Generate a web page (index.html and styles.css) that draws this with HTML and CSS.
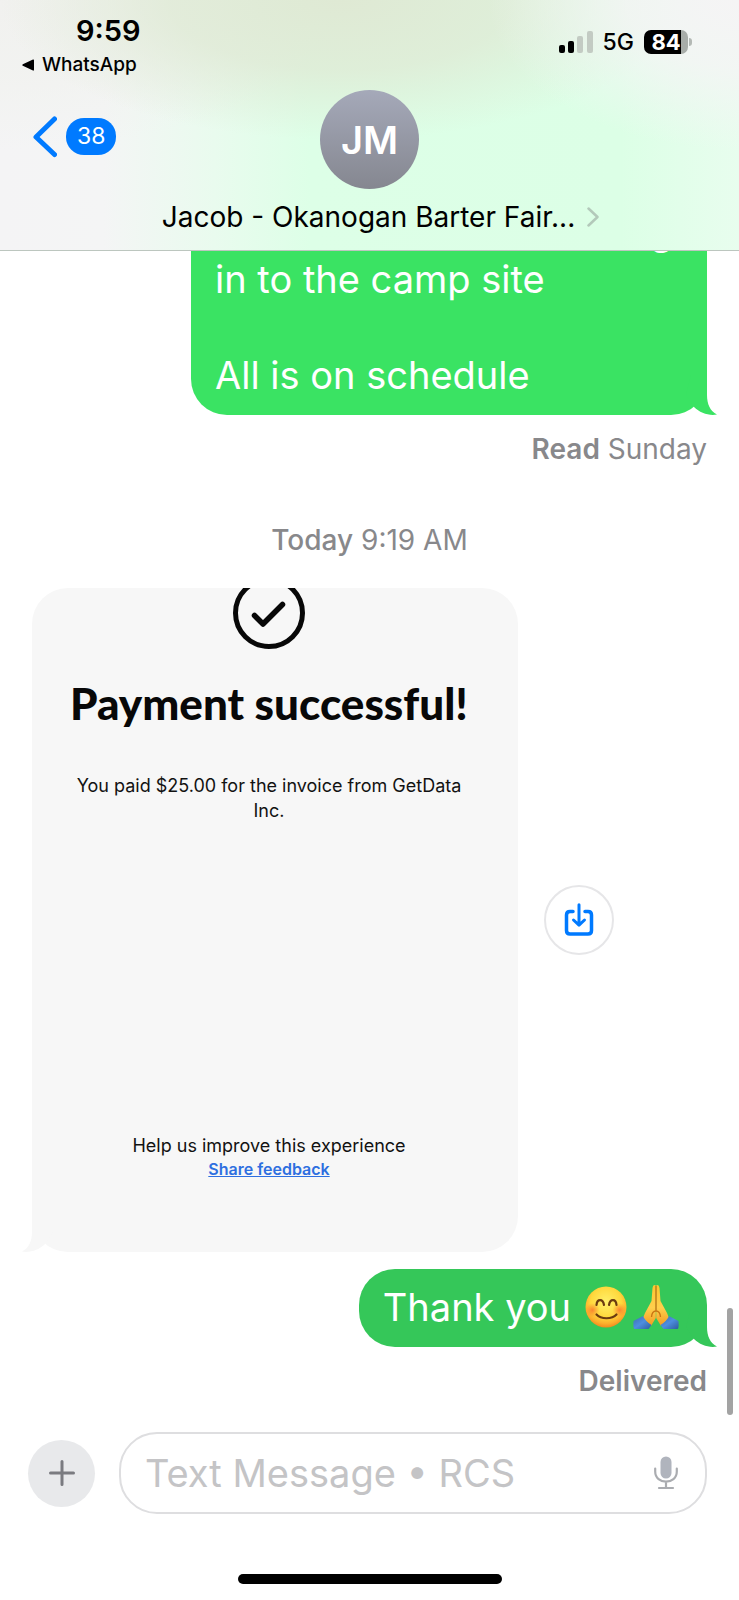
FILE: index.html
```html
<!DOCTYPE html>
<html lang="en">
<head>
<meta charset="utf-8">
<meta name="viewport" content="width=device-width, initial-scale=1">
<title>Messages</title>
<link rel="stylesheet" href="styles.css">
</head>
<body>
<header class="header">
  <div class="status">
    <div class="status-left">
      <time class="clock">9:59</time>
      <a class="return" href="#">
        <svg width="12" height="12" viewBox="0 0 12 12" aria-hidden="true"><path d="M11 0.5Q12 0 12 1.5V10.500Q12 12 11 11.500L0.800 6.800Q-0.200 6 0.800 5.200Z"/></svg>
        <span>WhatsApp</span>
      </a>
    </div>
    <div class="status-right">
      <svg width="34" height="22" viewBox="0 0 34 22" aria-hidden="true">
        <rect x="0" y="14" width="6" height="8" rx="2"/>
        <rect x="9" y="10" width="6" height="12" rx="2"/>
        <rect x="18" y="5" width="6" height="17" rx="2" fill="#c3cbc3"/>
        <rect x="28" y="0" width="6" height="22" rx="2" fill="#c3cbc3"/>
      </svg>
      <span class="network">5G</span>
      <span class="battery">84</span>
    </div>
  </div>
  <nav class="nav">
    <a class="back" href="#" aria-label="Back, 38 unread">
      <svg width="24" height="42" viewBox="0 0 24 42" aria-hidden="true"><path d="M21.500 3L3 21L21.500 38.500" fill="none" stroke="#007aff" stroke-width="5" stroke-linecap="round" stroke-linejoin="round"/></svg>
      <span class="unread">38</span>
    </a>
    <span class="avatar">JM</span>
  </nav>
  <button class="contact" type="button">
    <span>Jacob - Okanogan Barter Fair...</span>
    <svg width="12" height="20" viewBox="0 0 12 20" aria-hidden="true"><path d="M1.500 1.500L10.500 10L1.500 18.500" fill="none" stroke="#b3c9ba" stroke-width="2.500" stroke-linecap="round" stroke-linejoin="round"/></svg>
  </button>
</header>

<main class="thread">
  <div class="bubble bubble-early">
    <span class="line-end">g</span>
    <p>in to the camp site</p>
    <p class="paragraph">All is on schedule</p>
    <svg class="tail" width="36" height="40" viewBox="0 0 36 40" aria-hidden="true"><path d="M10 0H26V20C26 29 29 36 36 39.500C28 41 19 38 13 32L5 20Z"/></svg>
  </div>
  <p class="receipt"><strong>Read</strong> Sunday</p>
  <p class="stamp"><b>Today</b> 9:19 AM</p>

  <div class="attachment">
    <article class="card">
      <div class="card-body">
        <svg class="tick" width="72" height="61" viewBox="0 0 72 61" fill="none" stroke="#080808" aria-hidden="true"><circle cx="36" cy="25" r="33.500" stroke-width="5"/><path d="M21.500 27.500L30 36L49.500 16.500" stroke-width="5.500" stroke-linecap="round" stroke-linejoin="round"/></svg>
        <h1 class="card-title">Payment successful!</h1>
        <p class="card-text">You paid $25.00 for the invoice from GetData Inc.</p>
        <footer class="card-footer">
          <p>Help us improve this experience</p>
          <a href="#">Share feedback</a>
        </footer>
      </div>
      <svg class="tail-left" width="36" height="40" viewBox="0 0 36 40" aria-hidden="true"><path d="M26 0H10V20C10 29 7 36 0 39.500C8 41 17 38 23 32L31 20Z"/></svg>
    </article>
    <button class="save" type="button" aria-label="Save image">
      <svg width="30" height="34" viewBox="0 0 30 34" fill="none" stroke="#007aff" stroke-width="3.500" stroke-linecap="round" stroke-linejoin="round" aria-hidden="true"><path d="M9 8.500H6Q2.500 8.500 2.500 12V27.500Q2.500 31 6 31H24Q27.500 31 27.500 27.500V12Q27.500 8.500 24 8.500H21"/><path d="M15 1.800V21.500M9.500 17L15 22.200L20.500 17" stroke-width="3"/></svg>
    </button>
  </div>

  <div class="bubble bubble-thanks">
    <span>Thank you</span>
    <svg width="42" height="42" viewBox="0 0 42 42" role="img" aria-label="Smiling face">
      <defs>
        <radialGradient id="face" cx="50%" cy="38%" r="62%"><stop offset="0" stop-color="#fff06a"/><stop offset=".6" stop-color="#ffd83c"/><stop offset=".85" stop-color="#fcae2c"/><stop offset="1" stop-color="#f28a1e"/></radialGradient>
        <radialGradient id="blush"><stop offset="0" stop-color="#f9622b" stop-opacity=".7"/><stop offset="1" stop-color="#f9722b" stop-opacity="0"/></radialGradient>
      </defs>
      <circle cx="21" cy="21" r="20.500" fill="url(#face)"/>
      <circle cx="7.500" cy="24" r="7" fill="url(#blush)"/><circle cx="34.500" cy="24" r="7" fill="url(#blush)"/>
      <g fill="none" stroke="#6b3b10" stroke-width="2.200" stroke-linecap="round"><path d="M11.500 19C12 12.500 18 12.500 19 19"/><path d="M24 19C25 12.500 31 12.500 31.500 19"/><path d="M11.500 28.500C16 33.500 27 33.500 31.500 28.500"/></g>
    </svg>
    <svg width="46" height="46" viewBox="0 0 46 46" role="img" aria-label="Folded hands">
      <defs>
        <linearGradient id="skin" x1="0" y1="0" x2="0" y2="1"><stop offset="0" stop-color="#ffc530"/><stop offset=".55" stop-color="#ffcf4c"/><stop offset="1" stop-color="#f39b22"/></linearGradient>
        <linearGradient id="sleeve" x1="0" y1="0" x2="1" y2="1"><stop offset="0" stop-color="#3d6cae"/><stop offset=".5" stop-color="#4d8ee0"/><stop offset="1" stop-color="#2f5d9e"/></linearGradient>
      </defs>
      <path d="M22.800 1.500Q20 0 19.500 4L18.500 17L12 29L10 34L18 42L22.800 34Z" fill="url(#skin)"/>
      <path d="M23.200 1.500Q26 0 26.500 4L27.500 17L34 29L36 34L28 42L23.200 34Z" fill="url(#skin)"/>
      <path d="M23 2V27M23 27Q19 27 18.500 33M23 27Q27 27 27.500 33" fill="none" stroke="#c87413" stroke-width="1.300"/>
      <path d="M0.500 37L10 32Q12 37 18.500 41L15.500 45H1.500Q0 45 0.500 37Z" fill="url(#sleeve)"/>
      <path d="M45.500 37L36 32Q34 37 27.500 41L30.500 45H44.500Q46 45 45.500 37Z" fill="url(#sleeve)"/>
    </svg>
    <svg class="tail" width="36" height="40" viewBox="0 0 36 40" aria-hidden="true"><path d="M10 0H26V20C26 29 29 36 36 39.500C28 41 19 38 13 32L5 20Z"/></svg>
  </div>
  <p class="receipt"><strong>Delivered</strong></p>
  <div class="scroll-thumb"></div>
</main>

<form class="composer">
  <button class="add" type="button" aria-label="Add attachment">
    <svg width="26" height="26" viewBox="0 0 26 26" aria-hidden="true"><path d="M13 1.500V24.500M1.500 13H24.500" stroke="#7a7b80" stroke-width="3" stroke-linecap="round"/></svg>
  </button>
  <div class="field">
    <input type="text" aria-label="Message" placeholder="Text Message • RCS">
    <button class="mic" type="button" aria-label="Dictate">
      <svg width="24" height="34" viewBox="0 0 24 34" aria-hidden="true"><rect x="6.500" y="0.500" width="11" height="22" rx="5.500" fill="#b0b4bd"/><path d="M1.200 12.500V15.500C1.200 29 22.800 29 22.800 15.500V12.500M12 25.500V32M5 32H19" fill="none" stroke="#aaacb0" stroke-width="2.200" stroke-linecap="round"/></svg>
    </button>
  </div>
</form>
<div class="home"></div>
</body>
</html>
```
FILE: styles.css
```css
* { box-sizing: border-box; margin: 0; }
html { height: 100%; }
body {
  display: flex;
  flex-direction: column;
  height: 100%;
  background: #fff;
  color: #000;
  font-family: Inter, "Liberation Sans", sans-serif;
}
svg { flex: none; display: block; }
button { padding: 0; border: 0; background: none; color: inherit; font: inherit; }
a { color: inherit; text-decoration: none; }

/* Header */
.header {
  flex: none;
  border-bottom: 1px solid #bcc6bf;
  background:
    radial-gradient(ellipse 34% 60% at 100% 0%, #f5f4f5 0%, #f5f4f5cc 45%, #f5f4f500 100%),
    radial-gradient(ellipse 46% 56% at 46% 0%, #dfe9d4 0%, #dfead5cc 50%, #dfead500 100%),
    radial-gradient(ellipse 46% 60% at 0% 0%, #f1f1ef 0%, #f1f2efcc 50%, #f1f2ef00 100%),
    linear-gradient(90deg, #f4f4f5 0%, #f4f5f5 14%, #e9fbee 29%, #ddffe7 42%, #dcffe6 84%, #e8fdee 100%);
}
.status { display: flex; justify-content: space-between; padding: 12px 51px 0 22px; height: 78px; }
.status-left { display: flex; flex-direction: column; gap: 4px; }
.clock { padding-left: 54px; font-size: 29px; line-height: 38px; font-weight: 600; }
.return { display: flex; align-items: center; gap: 8px; font-size: 19px; line-height: 22px; font-weight: 500; }
.status-right { display: flex; align-items: center; gap: 10px; height: 60px; }
.network { font-size: 23px; line-height: 28px; font-weight: 500; }
.battery {
  position: relative;
  width: 44px;
  border-radius: 7px;
  background: linear-gradient(90deg, #000 84%, #a8ada9 84%);
  color: #fff;
  font-size: 22px;
  line-height: 24px;
  font-weight: 700;
  text-align: center;
}
.battery::after {
  content: "";
  position: absolute;
  top: 8px;
  right: -4px;
  width: 3px;
  height: 8px;
  border-radius: 0 3px 3px 0;
  background: #b4b9b5;
}
.nav { display: grid; grid-template-columns: 1fr auto 1fr; align-items: center; padding: 12px 33px 9px; }
.back { display: flex; align-items: center; align-self: start; gap: 9px; height: 84px; padding-top: 9px; }
.unread {
  padding: 0 11px;
  border-radius: 18px;
  background: #007aff;
  color: #fff;
  font-size: 23px;
  line-height: 37px;
}
.avatar {
  display: grid;
  place-items: center;
  width: 99px;
  height: 99px;
  border-radius: 50%;
  background: linear-gradient(#a5a9b9, #858790);
  color: #fff;
  font-size: 38px;
  font-weight: 600;
}
.contact {
  display: flex;
  align-items: center;
  gap: 12px;
  margin: 0 auto;
  padding: 0 0 14px 22px;
  font-size: 28px;
  line-height: 38px;
}

/* Conversation */
.thread {
  position: relative;
  flex: 1;
  min-height: 0;
  display: flex;
  flex-direction: column;
  justify-content: flex-end;
  padding: 0 32px 17px;
  overflow: hidden;
}
.bubble {
  position: relative;
  flex: none;
  align-self: flex-end;
  padding: 14px 24px 16px;
  border-radius: 36px;
  background: var(--bubble);
  color: #fff;
  font-size: 38px;
  line-height: 48px;
}
.bubble-early { --bubble: #3ae363; width: 516px; max-width: 100%; }
.bubble-thanks { --bubble: #35c759; display: flex; align-items: center; gap: 6px; padding-right: 28px; }
.bubble-thanks span { margin-right: 8px; }
.line-end { display: block; padding-right: 10px; text-align: right; }
.paragraph { margin-top: 48px; }
.tail { position: absolute; right: -10px; bottom: 0; fill: var(--bubble); }
.receipt, .stamp { flex: none; color: #88888b; font-size: 28px; line-height: 36px; }
.receipt { margin-top: 16px; text-align: right; }
.receipt strong { font-weight: 600; }
.stamp { margin: 55px 0 30px; text-align: center; }
.stamp b { font-weight: 500; }
.attachment { flex: none; display: flex; align-items: center; gap: 26px; margin-bottom: 17px; }
.card { position: relative; width: 72%; aspect-ratio: 486 / 664; }
.card-body {
  display: flex;
  flex-direction: column;
  align-items: center;
  height: 100%;
  padding: 0 48px 72px 36px;
  border-radius: 36px;
  background: #f7f7f7;
  color: #121212;
  text-align: center;
}
.tail-left { position: absolute; left: -10px; bottom: 0; fill: #f7f7f7; }
.card-title {
  margin-top: 26px;
  color: #080808;
  font-family: Lato, Inter, sans-serif;
  font-size: 44px;
  line-height: 56px;
  font-weight: 900;
  white-space: nowrap;
}
.card-text { margin-top: 42px; font-size: 18px; line-height: 25px; }
.card-footer { margin-top: auto; font-size: 18px; line-height: 25px; }
.card-footer a { display: block; color: #2e6fe0; font-size: 16px; line-height: 22px; font-weight: 600; text-decoration: underline; }
.save {
  display: grid;
  place-items: center;
  flex: none;
  width: 70px;
  height: 70px;
  border: 2px solid #e6e6e8;
  border-radius: 50%;
}
.scroll-thumb { position: absolute; right: 6px; bottom: 1px; width: 6px; height: 107px; border-radius: 3px; background: #a3a3a3; }

/* Composer */
.composer { flex: none; display: flex; align-items: center; gap: 24px; padding: 16px 32px 0 28px; }
.add { display: grid; place-items: center; flex: none; width: 67px; height: 67px; border-radius: 50%; background: #e8e9eb; }
.field {
  flex: 1;
  min-width: 0;
  display: flex;
  align-items: center;
  height: 82px;
  padding: 0 27px 0 24px;
  border: 2px solid #dedee0;
  border-radius: 38px;
}
.field input { flex: 1; min-width: 0; padding: 0; border: 0; outline: 0; background: none; font: inherit; font-size: 38px; line-height: 48px; }
.field input::placeholder { color: #c4c4c6; opacity: 1; }
.mic { flex: none; }
.home { flex: none; align-self: center; width: 264px; height: 10px; margin: 60px 0 16px; border-radius: 5px; background: #000; }
```
